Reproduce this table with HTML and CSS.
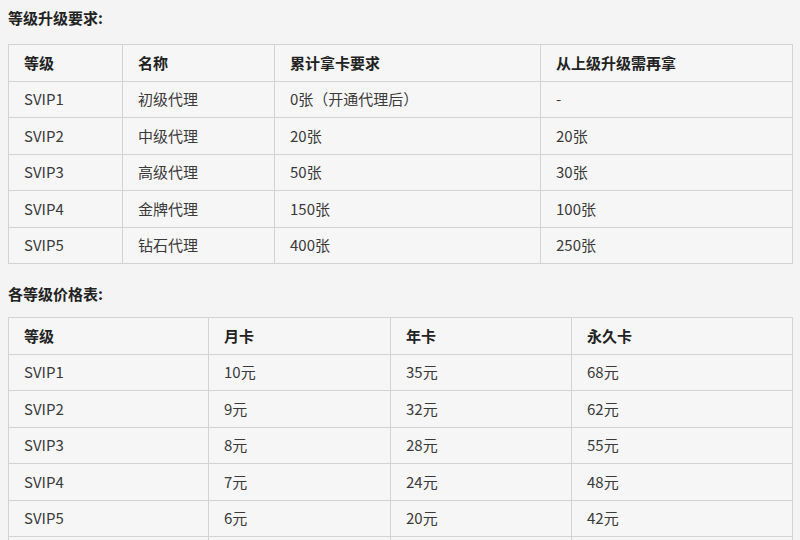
FILE: index.html
```html
<!DOCTYPE html>
<html lang="zh">
<head>
<meta charset="utf-8">
<link rel="stylesheet" href="styles.css">
</head>
<body>
<div class="page">
  <h2 class="title">等级升级要求:</h2>
  <table class="grid t1">
    <colgroup><col class="c1"><col class="c2"><col class="c3"><col class="c4"></colgroup>
    <thead>
      <tr><th>等级</th><th>名称</th><th>累计拿卡要求</th><th>从上级升级需再拿</th></tr>
    </thead>
    <tbody>
      <tr><td>SVIP1</td><td>初级代理</td><td>0张（开通代理后）</td><td>-</td></tr>
      <tr><td>SVIP2</td><td>中级代理</td><td>20张</td><td>20张</td></tr>
      <tr><td>SVIP3</td><td>高级代理</td><td>50张</td><td>30张</td></tr>
      <tr><td>SVIP4</td><td>金牌代理</td><td>150张</td><td>100张</td></tr>
      <tr><td>SVIP5</td><td>钻石代理</td><td>400张</td><td>250张</td></tr>
    </tbody>
  </table>

  <h2 class="title second">各等级价格表:</h2>
  <table class="grid t2">
    <colgroup><col class="d1"><col class="d2"><col class="d3"><col class="d4"></colgroup>
    <thead>
      <tr><th>等级</th><th>月卡</th><th>年卡</th><th>永久卡</th></tr>
    </thead>
    <tbody>
      <tr><td>SVIP1</td><td>10元</td><td>35元</td><td>68元</td></tr>
      <tr><td>SVIP2</td><td>9元</td><td>32元</td><td>62元</td></tr>
      <tr><td>SVIP3</td><td>8元</td><td>28元</td><td>55元</td></tr>
      <tr><td>SVIP4</td><td>7元</td><td>24元</td><td>48元</td></tr>
      <tr><td>SVIP5</td><td>6元</td><td>20元</td><td>42元</td></tr>
      <tr class="tail"><td></td><td></td><td></td><td></td></tr>
    </tbody>
  </table>
</div>
</body>
</html>
```
FILE: styles.css
```css
html, body {
  margin: 0;
  padding: 0;
  background: #f4f4f4;
}
body {
  font-family: "Noto Sans CJK SC", "Noto Sans", sans-serif;
  color: #333;
  font-size: 15px;
  overflow: hidden;
  height: 540px;
}
.page {
  padding: 8px 8px 0 8px;
}
.title {
  margin: 0 0 16px 0;
  font-size: 15px;
  line-height: 20px;
  font-weight: bold;
  color: #222;
}
.title.second {
  margin-top: 20px;
  margin-bottom: 13px;
}
.grid {
  width: 784px;
  border-collapse: collapse;
  table-layout: fixed;
  background: #f6f6f6;
}
.grid th, .grid td {
  border: 1px solid #d3d3d3;
  padding: 0 15px;
  height: 35.5px;
  text-align: left;
  vertical-align: middle;
  line-height: 20px;
  font-size: 15px;
}
.grid th {
  font-weight: bold;
  color: #222;
}
.grid td {
  color: #3a3a3a;
}
.c1 { width: 114px; }
.c2 { width: 152px; }
.c3 { width: 266px; }
.c4 { width: 252px; }
.d1 { width: 200px; }
.d2 { width: 182px; }
.d3 { width: 181px; }
.d4 { width: 221px; }
```
